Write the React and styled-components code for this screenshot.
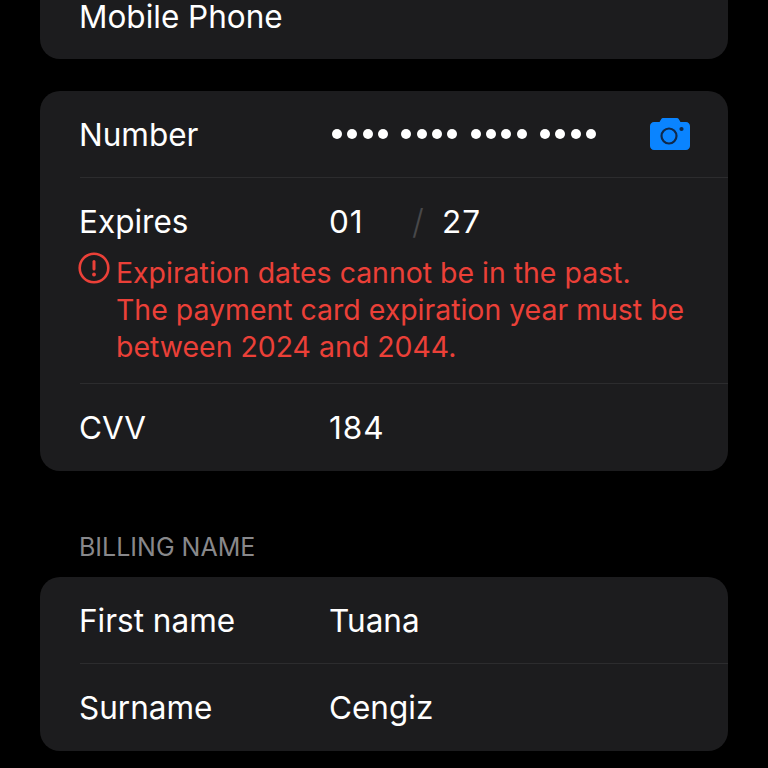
import React from 'react';
import styled, { createGlobalStyle } from 'styled-components';

const Global = createGlobalStyle`
    html, body {
        margin:0;
        padding:0;
        background:#000;
    }
    body {
        font-family:"Inter","Liberation Sans",sans-serif;
        -webkit-font-smoothing:antialiased;
    }
`

const Page = styled.div`
    width:768px;
    height:768px;
    overflow:hidden;
    background:#000;
    padding:0 40px;
    box-sizing:border-box;
    display:flex;
    flex-direction:column;
`
const Card = styled.div`
    background:#1c1c1e;
    border-radius:20px;
    overflow:hidden;
    padding-left:40px;
`
const TopCard = styled(Card)`
    height:59px;
    box-sizing:border-box;
    border-radius:0 0 20px 20px;
    margin-bottom:32px;
    padding-top:2px;
    display:flex;
    align-items:flex-start;
`
const CutLabel = styled.div`
    font-size:31.5px;
    line-height:30px;
    margin-left:-1px;
    color:#fff;
    white-space:nowrap;
`
const Row = styled.div`
    height:${p => p.$h || 86}px;
    display:flex;
    align-items:center;
    border-bottom:${p => p.$last ? 'none' : '1px solid #2c2c2e'};
`
const Label = styled.div`
    width:250px;
    flex:none;
    margin-left:-1px;
    font-size:31.5px;
    color:#fff;
    white-space:nowrap;
`
const Value = styled.div`
    font-size:31.5px;
    color:#fff;
    white-space:nowrap;
    letter-spacing:${p => p.$digits ? '1px' : '0'};
`
const Dots = styled.div`
    flex:1;
    display:flex;
    gap:13.5px;
    margin-left:3px;
`
const DotGroup = styled.div`
    display:flex;
    gap:5.3px;
`
const Dot = styled.span`
    width:10px;
    height:10px;
    border-radius:50%;
    background:#fff;
`
const CameraIcon = styled.svg`
    width:40px;
    height:32px;
    margin-right:38px;
    flex:none;
`
const ExpiresBlock = styled.div`
    border-bottom:1px solid #2c2c2e;
    height:206px;
    box-sizing:border-box;
    padding-top:24px;
`
const ExpiresRow = styled.div`
    display:flex;
    align-items:center;
    height:38px;
`
const Month = styled(Value)`
    width:83px;
`
const Slash = styled.span`
    width:30px;
    font-size:34px;
    font-weight:300;
    color:#48484a;
`
const ErrorRow = styled.div`
    display:flex;
    align-items:flex-start;
    gap:6px;
    margin-top:13px;
    margin-left:-2px;
`
const ErrorIcon = styled.svg`
    width:32px;
    height:32px;
    flex:none;
    margin-top:-1px;
`
const ErrorText = styled.div`
    font-size:28.45px;
    line-height:37px;
    color:#eb4038;
    white-space:nowrap;
    padding-top:1px;
`
const SectionTitle = styled.div`
    margin:59px 0 13px 39px;
    font-size:25px;
    line-height:34px;
    color:#88888b;
    white-space:nowrap;
`

const Dotted = () => (
  <Dots>
    {[0, 1, 2, 3].map(g => (
      <DotGroup key={g}>
        {[0, 1, 2, 3].map(d => <Dot key={d} />)}
      </DotGroup>
    ))}
  </Dots>
)

const App = () => {
  return (
    <Page>
      <Global />
      <TopCard>
        <CutLabel>Mobile Phone</CutLabel>
      </TopCard>

      <Card>
        <Row>
          <Label>Number</Label>
          <Dotted />
          <CameraIcon viewBox="0 0 40 32">
            <path
              fill="#0a84ff"
              d="M4 4h5.5l1.8-3c.4-.6.9-1 1.7-1h14c.8 0 1.3.4 1.7 1l1.8 3H36c2.2 0 4 1.8 4 4v20c0 2.2-1.8 4-4 4H4c-2.2 0-4-1.8-4-4V8c0-2.2 1.8-4 4-4z"
            />
            <circle cx="19" cy="18" r="7.5" fill="#0a84ff" stroke="#10294a" strokeWidth="2.2" />
            <circle cx="31.5" cy="11" r="2.1" fill="#10294a" />
          </CameraIcon>
        </Row>
        <ExpiresBlock>
          <ExpiresRow>
            <Label>Expires</Label>
            <Month $digits>01</Month>
            <Slash>/</Slash>
            <Value $digits>27</Value>
          </ExpiresRow>
          <ErrorRow>
            <ErrorIcon viewBox="0 0 32 32">
              <circle cx="16" cy="16" r="14.3" fill="none" stroke="#eb4038" strokeWidth="2.6" />
              <rect x="14.5" y="8" width="3" height="10.5" rx="1.5" fill="#eb4038" />
              <circle cx="16" cy="22.5" r="1.9" fill="#eb4038" />
            </ErrorIcon>
            <ErrorText>
              Expiration dates cannot be in the past.<br />
              The payment card expiration year must be<br />
              between 2024 and 2044.
            </ErrorText>
          </ErrorRow>
        </ExpiresBlock>
        <Row $h={87} $last>
          <Label>CVV</Label>
          <Value $digits>184</Value>
        </Row>
      </Card>

      <SectionTitle>BILLING NAME</SectionTitle>

      <Card>
        <Row>
          <Label>First name</Label>
          <Value>Tuana</Value>
        </Row>
        <Row $h={87} $last>
          <Label>Surname</Label>
          <Value>Cengiz</Value>
        </Row>
      </Card>
    </Page>
  )
}

export default App
